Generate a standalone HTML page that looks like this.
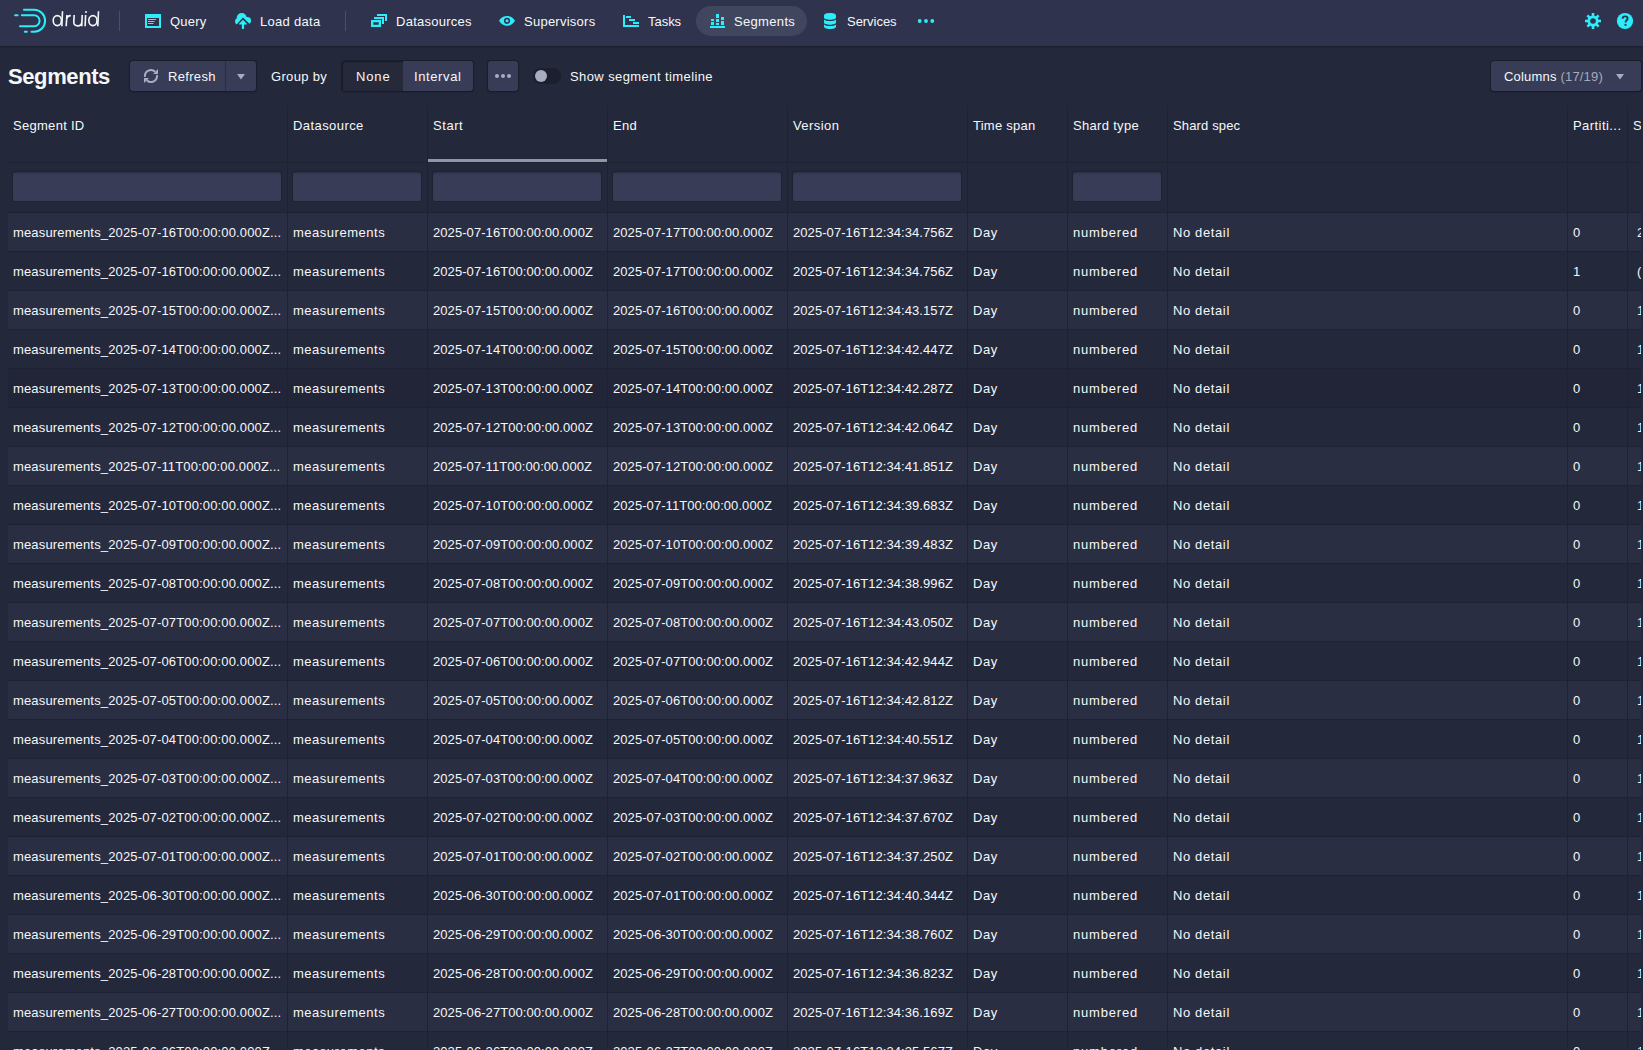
<!DOCTYPE html>
<html><head><meta charset="utf-8"><title>Segments</title>
<style>
*{box-sizing:border-box;margin:0;padding:0}
html,body{width:1643px;height:1050px;overflow:hidden;background:#24283b;font-family:"Liberation Sans",sans-serif;color:#f5f8fa;font-size:13px}
.abs{position:absolute}
.nav{position:absolute;left:0;top:0;width:1643px;height:46px;background:#2f334d;box-shadow:0 1px 0 #1d2030,0 2px 0 rgba(20,22,34,.25)}
.nt{position:absolute;top:15px;line-height:13px;font-size:13px;white-space:nowrap;letter-spacing:.15px}
.sep{position:absolute;top:11px;width:1px;height:20px;background:#4a4f68}
.pill{position:absolute;left:696px;top:6px;width:111px;height:30px;border-radius:15px;background:#41465f}
svg{position:absolute;overflow:visible}
.cy{fill:#2ceefb}
.tb-title{position:absolute;left:8px;top:66px;letter-spacing:-.4px;font-size:22px;line-height:21px;font-weight:bold;white-space:nowrap}
.btn{position:absolute;top:61px;height:30px;background:#383c57;border-radius:3px;box-shadow:0 0 0 1px rgba(20,22,34,.45),0 1px 2px rgba(20,22,34,.5)}
.tt{position:absolute;top:70px;line-height:13px;font-size:13px;white-space:nowrap;letter-spacing:.3px}
.table{position:absolute;left:8px;top:106px;width:1633px;height:944px;overflow:hidden}
.tr{position:relative;display:flex;white-space:nowrap;border-bottom:1px solid #1f2233}
.c{position:relative;flex:none;border-right:1px solid #1f2232;overflow:hidden;padding-left:5px}
.c0{width:280px}.c1{width:140px}.c2{width:180px}.c3{width:180px}.c4{width:180px}.c5{width:100px}.c6{width:100px}.c7{width:400px}.c8{width:60px}.c9{width:60px;border-right:none}
.thead{height:57px}
.thead .c{padding-top:13px;line-height:13px}
.tfilter{height:50px}
.tfilter .c{padding-top:8px;padding-right:5px;padding-left:4px}
.inp{height:31px;background:#383c57;border-radius:3px;box-shadow:inset 0 0 0 1px #1f2232,inset 0 2px 2px rgba(20,22,34,.35)}
.sortbar{position:absolute;left:0;right:0;bottom:0;height:3px;background:#9096aa}
.tr.odd,.tr.even{height:39px}
.tr.odd{background:#2a2e43}
.tr.odd .c,.tr.even .c{line-height:38px;padding-top:1px}
.t{letter-spacing:.3px}
.t.d{letter-spacing:.05px}
.sz{position:relative;left:4px}
.tr.hov{background:#212537}

</style></head>
<body>
<div class="nav">
<svg style="left:0;top:0" width="120" height="46" viewBox="0 0 120 46">
 <g fill="none" stroke="#2ceefb" stroke-width="2" stroke-linecap="round">
  <path d="M23.9,9.8 H34.15 A10.95,10.95 0 0 1 34.15,31.7 H31.5"/>
  <path d="M24.8,31.7 H26.8"/>
  <path d="M21.8,15.3 H34.15 A5.45,5.45 0 0 1 34.15,26.2 H20"/>
  <path d="M15.1,15.3 H17.6"/>
 </g>
 <g fill="none" stroke="#f5f8fa" stroke-width="1.6" stroke-linecap="butt">
  <ellipse cx="57.3" cy="20.6" rx="4.1" ry="5.0"/>
  <path d="M62.5,11.2 L61.9,26.3"/>
  <path d="M66.9,15 L66.2,26.3 M66.6,19.2 Q67.4,15.5 70.8,15.6"/>
  <path d="M74.2,15 L73.8,21.6 Q73.5,25.9 77.8,25.9 Q81.7,25.9 81.9,21.6 L82.2,15 M82.2,15 L81.8,26.3"/>
  <path d="M85.6,15 L85.1,26.3"/>
  <ellipse cx="92.9" cy="20.6" rx="4.1" ry="5.0"/>
  <path d="M98.5,11.2 L97.8,26.3"/>
 </g>
 <circle cx="86" cy="12" r="1" fill="#f5f8fa"/>
</svg>
<div class="sep" style="left:119px"></div>
<!-- Query -->
<svg style="left:145px;top:13px" width="16" height="16" viewBox="0 0 16 16">
 <path class="cy" fill-rule="evenodd" d="M0,1 H16 V15 H0 Z M2,5 V13 H14 V5 Z"/>
 <rect class="cy" x="3" y="6" width="8" height="1"/>
 <rect class="cy" x="3" y="8" width="6.5" height="1"/>
 <rect class="cy" x="3" y="10" width="5.5" height="1"/>
</svg>
<div class="nt" style="left:170px"><span style="letter-spacing:0.2px">Query</span></div>
<!-- Load data -->
<svg style="left:235px;top:13px" width="16" height="16" viewBox="0 0 16 16">
 <defs><mask id="cm" maskUnits="userSpaceOnUse" x="-2" y="-2" width="20" height="20">
  <rect x="-2" y="-2" width="20" height="20" fill="#000"/>
  <g fill="#fff"><circle cx="6.7" cy="5.1" r="5"/><circle cx="3.2" cy="8.4" r="3.15"/><circle cx="12.4" cy="7.6" r="3.65"/></g>
  <path d="M-1,14.4 L7.95,4.6 L17,13.3 V17 H-1 Z" fill="#000"/>
 </mask></defs>
 <rect x="-2" y="-2" width="20" height="20" class="cy" mask="url(#cm)"/>
 <path class="cy" d="M7.95,6.7 L12,10.9 L11.6,11.4 L9.05,11.4 V15.9 H6.9 V11.4 H4.3 L3.9,10.9 Z"/>
</svg>
<div class="nt" style="left:260px"><span style="letter-spacing:0.3px">Load data</span></div>
<div class="sep" style="left:345px"></div>
<!-- Datasources -->
<svg style="left:371px;top:13px" width="16" height="16" viewBox="0 0 16 16">
 <path class="cy" fill-rule="evenodd" d="M0,7 H10 V14 H0 Z M2.3,9.3 V11.7 H7.7 V9.3 Z"/>
 <path class="cy" d="M3,4 H13 V11 H11 V6 H3 Z"/>
 <path class="cy" d="M6,1 H16 V8 H14 V3 H6 Z"/>
</svg>
<div class="nt" style="left:396px"><span style="letter-spacing:0.26px">Datasources</span></div>
<!-- Supervisors -->
<svg style="left:499px;top:13px" width="16" height="16" viewBox="0 0 16 16">
 <path class="cy" fill-rule="evenodd" d="M0,7.8 C2,4.4 5,3 8,3 C11,3 14,4.4 16,7.8 C14,11.3 11,12.8 8,12.8 C5,12.8 2,11.3 0,7.8 Z M8,4.7 A3.1,3.1 0 1 0 8,10.9 A3.1,3.1 0 1 0 8,4.7 Z"/>
 <circle class="cy" cx="8" cy="7.8" r="1.5"/>
</svg>
<div class="nt" style="left:524px"><span style="letter-spacing:0.25px">Supervisors</span></div>
<!-- Tasks -->
<svg style="left:623px;top:13px" width="16" height="16" viewBox="0 0 16 16">
 <rect class="cy" x="0" y="2" width="2" height="12"/>
 <rect class="cy" x="0" y="12" width="16" height="2"/>
 <rect class="cy" x="3" y="3" width="5" height="2"/>
 <rect class="cy" x="6" y="6" width="6" height="2"/>
 <rect class="cy" x="10" y="9" width="6" height="2"/>
</svg>
<div class="nt" style="left:648px"><span style="letter-spacing:-0.03px">Tasks</span></div>
<div class="pill"></div>
<!-- Segments -->
<svg style="left:710px;top:13px" width="16" height="16" viewBox="0 0 16 16">
 <rect class="cy" x="0" y="13" width="15" height="2"/>
 <rect class="cy" x="1" y="6" width="3" height="2"/>
 <rect class="cy" x="1" y="9" width="3" height="3"/>
 <rect class="cy" x="6" y="1" width="3" height="4"/>
 <rect class="cy" x="6" y="6" width="3" height="3"/>
 <rect class="cy" x="6" y="10" width="3" height="2"/>
 <rect class="cy" x="11" y="4" width="3" height="3"/>
 <rect class="cy" x="11" y="8" width="3" height="4"/>
</svg>
<div class="nt" style="left:734px"><span style="letter-spacing:0.33px">Segments</span></div>
<!-- Services -->
<svg style="left:824px;top:13px" width="12" height="16" viewBox="0 0 12 16">
 <path class="cy" d="M0,2.5 C0,0.8 2.7,0 6,0 C9.3,0 12,0.8 12,2.5 V4.6 C12,6 9.3,6.8 6,6.8 C2.7,6.8 0,6 0,4.6 Z"/>
 <path class="cy" d="M0,6.4 C1.2,7.4 3.5,7.9 6,7.9 C8.5,7.9 10.8,7.4 12,6.4 V9.6 C12,11 9.3,11.8 6,11.8 C2.7,11.8 0,11 0,9.6 Z"/>
 <path class="cy" d="M0,11.4 C1.2,12.4 3.5,12.9 6,12.9 C8.5,12.9 10.8,12.4 12,11.4 V13.5 C12,15.2 9.3,16 6,16 C2.7,16 0,15.2 0,13.5 Z"/>
</svg>
<div class="nt" style="left:847px"><span style="letter-spacing:-0.04px">Services</span></div>
<svg style="left:917px;top:13px" width="18" height="16" viewBox="0 0 18 16">
 <circle class="cy" cx="2.7" cy="8" r="1.9"/><circle class="cy" cx="9" cy="8" r="1.9"/><circle class="cy" cx="15.3" cy="8" r="1.9"/>
</svg>
<!-- gear -->
<svg style="left:1585px;top:13px" width="16" height="16" viewBox="0 0 16 16">
 <defs><mask id="gm" maskUnits="userSpaceOnUse" x="-1" y="-1" width="18" height="18">
  <rect x="-1" y="-1" width="18" height="18" fill="#000"/>
  <g fill="#fff">
  <rect x="6.7" y="0" width="2.6" height="16"/>
  <rect x="0" y="6.7" width="16" height="2.6"/>
  <rect x="6.7" y="0" width="2.6" height="16" transform="rotate(45 8 8)"/>
  <rect x="6.7" y="0" width="2.6" height="16" transform="rotate(-45 8 8)"/>
  <circle cx="8" cy="8" r="5.6"/>
  </g>
  <circle cx="8" cy="8" r="2.8" fill="#000"/>
 </mask></defs>
 <rect x="-1" y="-1" width="18" height="18" class="cy" mask="url(#gm)"/>
</svg>
<!-- help -->
<svg style="left:1617px;top:13px" width="16" height="16" viewBox="0 0 16 16">
 <circle class="cy" cx="8" cy="8" r="8.1"/>
 <path d="M5.6,5.8 C5.6,4.2 6.7,3.4 8.1,3.4 C9.6,3.4 10.6,4.3 10.6,5.5 C10.6,7.2 8.5,7.4 8.5,9.6" fill="none" stroke="#2f334d" stroke-width="1.9"/>
 <rect x="7.5" y="10.9" width="2" height="1.9" fill="#2f334d"/>
</svg>
</div>

<div class="tb-title">Segments</div>
<div class="btn" style="left:130px;width:126px"></div>
<div class="abs" style="left:225px;top:61px;width:1px;height:30px;background:#2a2d44"></div>
<svg style="left:144px;top:69px" width="14" height="14" viewBox="0 0 14 14">
 <g fill="none" stroke="#a8adc2" stroke-width="2">
  <path d="M1,7.8 A6,6 0 0 1 11.2,2.8"/>
  <path d="M13,6.2 A6,6 0 0 1 2.8,11.2"/>
 </g>
 <path fill="#a8adc2" d="M9.1,4.9 L14,4.9 L14,-0.1 Z"/>
 <path fill="#a8adc2" d="M0,9 L5.1,9 L0,14.1 Z"/>
</svg>
<div class="tt" style="left:168px"><span style="letter-spacing:0.32px">Refresh</span></div>
<svg style="left:237px;top:74px" width="8" height="6" viewBox="0 0 8 6"><path fill="#a8adc2" d="M0,0 H8 L4,5.5 Z"/></svg>
<div class="tt" style="left:271px"><span style="letter-spacing:0.33px">Group by</span></div>
<div class="btn" style="left:342px;width:131px;background:#383c57"></div>
<div class="abs" style="left:342px;top:61px;width:61px;height:30px;background:#252939;border-radius:3px 0 0 3px;box-shadow:inset 1px 1px 1px rgba(0,0,0,.35)"></div>
<div class="tt" style="left:356px"><span style="letter-spacing:0.87px">None</span></div>
<div class="tt" style="left:414px"><span style="letter-spacing:0.61px">Interval</span></div>
<div class="btn" style="left:488px;width:30px"></div>
<svg style="left:488px;top:61px" width="30" height="30" viewBox="0 0 30 30"><g fill="#a8adc2"><circle cx="9" cy="15" r="2"/><circle cx="15" cy="15" r="2"/><circle cx="21" cy="15" r="2"/></g></svg>
<div class="abs" style="left:533px;top:68px;width:28px;height:16px;border-radius:8px;background:#1c1f2e"></div>
<div class="abs" style="left:535px;top:70px;width:12px;height:12px;border-radius:6px;background:#a9adc4"></div>
<div class="tt" style="left:570px"><span style="letter-spacing:0.41px">Show segment timeline</span></div>
<div class="btn" style="left:1491px;width:150px"></div>
<div class="tt" style="left:1504px;letter-spacing:.19px">Columns <span style="color:#a6aaba">(17/19)</span></div>
<svg style="left:1616px;top:74px" width="8" height="6" viewBox="0 0 8 6"><path fill="#a8adc2" d="M0,0 H8 L4,5.5 Z"/></svg>

<div class="table">
<div class="tr thead"><div class="c c0"><span class="t a" style="letter-spacing:0.29px">Segment ID</span></div><div class="c c1"><span class="t a" style="letter-spacing:0.43px">Datasource</span></div><div class="c c2"><span class="t a" style="letter-spacing:0.55px">Start</span><div class="sortbar"></div></div><div class="c c3"><span class="t a" style="letter-spacing:0.3px">End</span></div><div class="c c4"><span class="t a" style="letter-spacing:0.42px">Version</span></div><div class="c c5"><span class="t a" style="letter-spacing:0.25px">Time span</span></div><div class="c c6"><span class="t a" style="letter-spacing:0.31px">Shard type</span></div><div class="c c7"><span class="t a" style="letter-spacing:0.14px">Shard spec</span></div><div class="c c8"><span class="t a" style="letter-spacing:0.44px">Partiti...</span></div><div class="c c9"><span class="t a" style="letter-spacing:0.05px">S</span></div></div>
<div class="tr tfilter"><div class="c c0"><div class="inp"></div></div><div class="c c1"><div class="inp"></div></div><div class="c c2"><div class="inp"></div></div><div class="c c3"><div class="inp"></div></div><div class="c c4"><div class="inp"></div></div><div class="c c5"></div><div class="c c6"><div class="inp"></div></div><div class="c c7"></div><div class="c c8"></div><div class="c c9"></div></div>
<div class="tr odd"><div class="c c0"><span class="t a" style="letter-spacing:0.15px">measurements_2025-07-16T00:00:00.000Z...</span></div><div class="c c1"><span class="t a" style="letter-spacing:0.52px">measurements</span></div><div class="c c2"><span class="t d" style="letter-spacing:0.07px">2025-07-16T00:00:00.000Z</span></div><div class="c c3"><span class="t d" style="letter-spacing:0.07px">2025-07-17T00:00:00.000Z</span></div><div class="c c4"><span class="t d" style="letter-spacing:0.07px">2025-07-16T12:34:34.756Z</span></div><div class="c c5"><span class="t a" style="letter-spacing:0.6px">Day</span></div><div class="c c6"><span class="t a" style="letter-spacing:0.81px">numbered</span></div><div class="c c7"><span class="t a" style="letter-spacing:0.62px">No detail</span></div><div class="c c8"><span class="t d" style="letter-spacing:0.05px">0</span></div><div class="c c9"><span class="t d sz" style="letter-spacing:0.05px">2</span></div></div><div class="tr even"><div class="c c0"><span class="t a" style="letter-spacing:0.15px">measurements_2025-07-16T00:00:00.000Z...</span></div><div class="c c1"><span class="t a" style="letter-spacing:0.52px">measurements</span></div><div class="c c2"><span class="t d" style="letter-spacing:0.07px">2025-07-16T00:00:00.000Z</span></div><div class="c c3"><span class="t d" style="letter-spacing:0.07px">2025-07-17T00:00:00.000Z</span></div><div class="c c4"><span class="t d" style="letter-spacing:0.07px">2025-07-16T12:34:34.756Z</span></div><div class="c c5"><span class="t a" style="letter-spacing:0.6px">Day</span></div><div class="c c6"><span class="t a" style="letter-spacing:0.81px">numbered</span></div><div class="c c7"><span class="t a" style="letter-spacing:0.62px">No detail</span></div><div class="c c8"><span class="t d" style="letter-spacing:0.05px">1</span></div><div class="c c9"><span class="t d sz" style="letter-spacing:0.05px">(</span></div></div><div class="tr odd"><div class="c c0"><span class="t a" style="letter-spacing:0.15px">measurements_2025-07-15T00:00:00.000Z...</span></div><div class="c c1"><span class="t a" style="letter-spacing:0.52px">measurements</span></div><div class="c c2"><span class="t d" style="letter-spacing:0.07px">2025-07-15T00:00:00.000Z</span></div><div class="c c3"><span class="t d" style="letter-spacing:0.07px">2025-07-16T00:00:00.000Z</span></div><div class="c c4"><span class="t d" style="letter-spacing:0.07px">2025-07-16T12:34:43.157Z</span></div><div class="c c5"><span class="t a" style="letter-spacing:0.6px">Day</span></div><div class="c c6"><span class="t a" style="letter-spacing:0.81px">numbered</span></div><div class="c c7"><span class="t a" style="letter-spacing:0.62px">No detail</span></div><div class="c c8"><span class="t d" style="letter-spacing:0.05px">0</span></div><div class="c c9"><span class="t d sz" style="letter-spacing:0.05px">1</span></div></div><div class="tr even"><div class="c c0"><span class="t a" style="letter-spacing:0.15px">measurements_2025-07-14T00:00:00.000Z...</span></div><div class="c c1"><span class="t a" style="letter-spacing:0.52px">measurements</span></div><div class="c c2"><span class="t d" style="letter-spacing:0.07px">2025-07-14T00:00:00.000Z</span></div><div class="c c3"><span class="t d" style="letter-spacing:0.07px">2025-07-15T00:00:00.000Z</span></div><div class="c c4"><span class="t d" style="letter-spacing:0.07px">2025-07-16T12:34:42.447Z</span></div><div class="c c5"><span class="t a" style="letter-spacing:0.6px">Day</span></div><div class="c c6"><span class="t a" style="letter-spacing:0.81px">numbered</span></div><div class="c c7"><span class="t a" style="letter-spacing:0.62px">No detail</span></div><div class="c c8"><span class="t d" style="letter-spacing:0.05px">0</span></div><div class="c c9"><span class="t d sz" style="letter-spacing:0.05px">1</span></div></div><div class="tr even hov"><div class="c c0"><span class="t a" style="letter-spacing:0.15px">measurements_2025-07-13T00:00:00.000Z...</span></div><div class="c c1"><span class="t a" style="letter-spacing:0.52px">measurements</span></div><div class="c c2"><span class="t d" style="letter-spacing:0.07px">2025-07-13T00:00:00.000Z</span></div><div class="c c3"><span class="t d" style="letter-spacing:0.07px">2025-07-14T00:00:00.000Z</span></div><div class="c c4"><span class="t d" style="letter-spacing:0.07px">2025-07-16T12:34:42.287Z</span></div><div class="c c5"><span class="t a" style="letter-spacing:0.6px">Day</span></div><div class="c c6"><span class="t a" style="letter-spacing:0.81px">numbered</span></div><div class="c c7"><span class="t a" style="letter-spacing:0.62px">No detail</span></div><div class="c c8"><span class="t d" style="letter-spacing:0.05px">0</span></div><div class="c c9"><span class="t d sz" style="letter-spacing:0.05px">1</span></div></div><div class="tr even"><div class="c c0"><span class="t a" style="letter-spacing:0.15px">measurements_2025-07-12T00:00:00.000Z...</span></div><div class="c c1"><span class="t a" style="letter-spacing:0.52px">measurements</span></div><div class="c c2"><span class="t d" style="letter-spacing:0.07px">2025-07-12T00:00:00.000Z</span></div><div class="c c3"><span class="t d" style="letter-spacing:0.07px">2025-07-13T00:00:00.000Z</span></div><div class="c c4"><span class="t d" style="letter-spacing:0.07px">2025-07-16T12:34:42.064Z</span></div><div class="c c5"><span class="t a" style="letter-spacing:0.6px">Day</span></div><div class="c c6"><span class="t a" style="letter-spacing:0.81px">numbered</span></div><div class="c c7"><span class="t a" style="letter-spacing:0.62px">No detail</span></div><div class="c c8"><span class="t d" style="letter-spacing:0.05px">0</span></div><div class="c c9"><span class="t d sz" style="letter-spacing:0.05px">1</span></div></div><div class="tr odd"><div class="c c0"><span class="t a" style="letter-spacing:0.15px">measurements_2025-07-11T00:00:00.000Z...</span></div><div class="c c1"><span class="t a" style="letter-spacing:0.52px">measurements</span></div><div class="c c2"><span class="t d" style="letter-spacing:0.07px">2025-07-11T00:00:00.000Z</span></div><div class="c c3"><span class="t d" style="letter-spacing:0.07px">2025-07-12T00:00:00.000Z</span></div><div class="c c4"><span class="t d" style="letter-spacing:0.07px">2025-07-16T12:34:41.851Z</span></div><div class="c c5"><span class="t a" style="letter-spacing:0.6px">Day</span></div><div class="c c6"><span class="t a" style="letter-spacing:0.81px">numbered</span></div><div class="c c7"><span class="t a" style="letter-spacing:0.62px">No detail</span></div><div class="c c8"><span class="t d" style="letter-spacing:0.05px">0</span></div><div class="c c9"><span class="t d sz" style="letter-spacing:0.05px">1</span></div></div><div class="tr even"><div class="c c0"><span class="t a" style="letter-spacing:0.15px">measurements_2025-07-10T00:00:00.000Z...</span></div><div class="c c1"><span class="t a" style="letter-spacing:0.52px">measurements</span></div><div class="c c2"><span class="t d" style="letter-spacing:0.07px">2025-07-10T00:00:00.000Z</span></div><div class="c c3"><span class="t d" style="letter-spacing:0.07px">2025-07-11T00:00:00.000Z</span></div><div class="c c4"><span class="t d" style="letter-spacing:0.07px">2025-07-16T12:34:39.683Z</span></div><div class="c c5"><span class="t a" style="letter-spacing:0.6px">Day</span></div><div class="c c6"><span class="t a" style="letter-spacing:0.81px">numbered</span></div><div class="c c7"><span class="t a" style="letter-spacing:0.62px">No detail</span></div><div class="c c8"><span class="t d" style="letter-spacing:0.05px">0</span></div><div class="c c9"><span class="t d sz" style="letter-spacing:0.05px">1</span></div></div><div class="tr odd"><div class="c c0"><span class="t a" style="letter-spacing:0.15px">measurements_2025-07-09T00:00:00.000Z...</span></div><div class="c c1"><span class="t a" style="letter-spacing:0.52px">measurements</span></div><div class="c c2"><span class="t d" style="letter-spacing:0.07px">2025-07-09T00:00:00.000Z</span></div><div class="c c3"><span class="t d" style="letter-spacing:0.07px">2025-07-10T00:00:00.000Z</span></div><div class="c c4"><span class="t d" style="letter-spacing:0.07px">2025-07-16T12:34:39.483Z</span></div><div class="c c5"><span class="t a" style="letter-spacing:0.6px">Day</span></div><div class="c c6"><span class="t a" style="letter-spacing:0.81px">numbered</span></div><div class="c c7"><span class="t a" style="letter-spacing:0.62px">No detail</span></div><div class="c c8"><span class="t d" style="letter-spacing:0.05px">0</span></div><div class="c c9"><span class="t d sz" style="letter-spacing:0.05px">1</span></div></div><div class="tr even"><div class="c c0"><span class="t a" style="letter-spacing:0.15px">measurements_2025-07-08T00:00:00.000Z...</span></div><div class="c c1"><span class="t a" style="letter-spacing:0.52px">measurements</span></div><div class="c c2"><span class="t d" style="letter-spacing:0.07px">2025-07-08T00:00:00.000Z</span></div><div class="c c3"><span class="t d" style="letter-spacing:0.07px">2025-07-09T00:00:00.000Z</span></div><div class="c c4"><span class="t d" style="letter-spacing:0.07px">2025-07-16T12:34:38.996Z</span></div><div class="c c5"><span class="t a" style="letter-spacing:0.6px">Day</span></div><div class="c c6"><span class="t a" style="letter-spacing:0.81px">numbered</span></div><div class="c c7"><span class="t a" style="letter-spacing:0.62px">No detail</span></div><div class="c c8"><span class="t d" style="letter-spacing:0.05px">0</span></div><div class="c c9"><span class="t d sz" style="letter-spacing:0.05px">1</span></div></div><div class="tr odd"><div class="c c0"><span class="t a" style="letter-spacing:0.15px">measurements_2025-07-07T00:00:00.000Z...</span></div><div class="c c1"><span class="t a" style="letter-spacing:0.52px">measurements</span></div><div class="c c2"><span class="t d" style="letter-spacing:0.07px">2025-07-07T00:00:00.000Z</span></div><div class="c c3"><span class="t d" style="letter-spacing:0.07px">2025-07-08T00:00:00.000Z</span></div><div class="c c4"><span class="t d" style="letter-spacing:0.07px">2025-07-16T12:34:43.050Z</span></div><div class="c c5"><span class="t a" style="letter-spacing:0.6px">Day</span></div><div class="c c6"><span class="t a" style="letter-spacing:0.81px">numbered</span></div><div class="c c7"><span class="t a" style="letter-spacing:0.62px">No detail</span></div><div class="c c8"><span class="t d" style="letter-spacing:0.05px">0</span></div><div class="c c9"><span class="t d sz" style="letter-spacing:0.05px">1</span></div></div><div class="tr even"><div class="c c0"><span class="t a" style="letter-spacing:0.15px">measurements_2025-07-06T00:00:00.000Z...</span></div><div class="c c1"><span class="t a" style="letter-spacing:0.52px">measurements</span></div><div class="c c2"><span class="t d" style="letter-spacing:0.07px">2025-07-06T00:00:00.000Z</span></div><div class="c c3"><span class="t d" style="letter-spacing:0.07px">2025-07-07T00:00:00.000Z</span></div><div class="c c4"><span class="t d" style="letter-spacing:0.07px">2025-07-16T12:34:42.944Z</span></div><div class="c c5"><span class="t a" style="letter-spacing:0.6px">Day</span></div><div class="c c6"><span class="t a" style="letter-spacing:0.81px">numbered</span></div><div class="c c7"><span class="t a" style="letter-spacing:0.62px">No detail</span></div><div class="c c8"><span class="t d" style="letter-spacing:0.05px">0</span></div><div class="c c9"><span class="t d sz" style="letter-spacing:0.05px">1</span></div></div><div class="tr odd"><div class="c c0"><span class="t a" style="letter-spacing:0.15px">measurements_2025-07-05T00:00:00.000Z...</span></div><div class="c c1"><span class="t a" style="letter-spacing:0.52px">measurements</span></div><div class="c c2"><span class="t d" style="letter-spacing:0.07px">2025-07-05T00:00:00.000Z</span></div><div class="c c3"><span class="t d" style="letter-spacing:0.07px">2025-07-06T00:00:00.000Z</span></div><div class="c c4"><span class="t d" style="letter-spacing:0.07px">2025-07-16T12:34:42.812Z</span></div><div class="c c5"><span class="t a" style="letter-spacing:0.6px">Day</span></div><div class="c c6"><span class="t a" style="letter-spacing:0.81px">numbered</span></div><div class="c c7"><span class="t a" style="letter-spacing:0.62px">No detail</span></div><div class="c c8"><span class="t d" style="letter-spacing:0.05px">0</span></div><div class="c c9"><span class="t d sz" style="letter-spacing:0.05px">1</span></div></div><div class="tr even"><div class="c c0"><span class="t a" style="letter-spacing:0.15px">measurements_2025-07-04T00:00:00.000Z...</span></div><div class="c c1"><span class="t a" style="letter-spacing:0.52px">measurements</span></div><div class="c c2"><span class="t d" style="letter-spacing:0.07px">2025-07-04T00:00:00.000Z</span></div><div class="c c3"><span class="t d" style="letter-spacing:0.07px">2025-07-05T00:00:00.000Z</span></div><div class="c c4"><span class="t d" style="letter-spacing:0.07px">2025-07-16T12:34:40.551Z</span></div><div class="c c5"><span class="t a" style="letter-spacing:0.6px">Day</span></div><div class="c c6"><span class="t a" style="letter-spacing:0.81px">numbered</span></div><div class="c c7"><span class="t a" style="letter-spacing:0.62px">No detail</span></div><div class="c c8"><span class="t d" style="letter-spacing:0.05px">0</span></div><div class="c c9"><span class="t d sz" style="letter-spacing:0.05px">1</span></div></div><div class="tr odd"><div class="c c0"><span class="t a" style="letter-spacing:0.15px">measurements_2025-07-03T00:00:00.000Z...</span></div><div class="c c1"><span class="t a" style="letter-spacing:0.52px">measurements</span></div><div class="c c2"><span class="t d" style="letter-spacing:0.07px">2025-07-03T00:00:00.000Z</span></div><div class="c c3"><span class="t d" style="letter-spacing:0.07px">2025-07-04T00:00:00.000Z</span></div><div class="c c4"><span class="t d" style="letter-spacing:0.07px">2025-07-16T12:34:37.963Z</span></div><div class="c c5"><span class="t a" style="letter-spacing:0.6px">Day</span></div><div class="c c6"><span class="t a" style="letter-spacing:0.81px">numbered</span></div><div class="c c7"><span class="t a" style="letter-spacing:0.62px">No detail</span></div><div class="c c8"><span class="t d" style="letter-spacing:0.05px">0</span></div><div class="c c9"><span class="t d sz" style="letter-spacing:0.05px">1</span></div></div><div class="tr even"><div class="c c0"><span class="t a" style="letter-spacing:0.15px">measurements_2025-07-02T00:00:00.000Z...</span></div><div class="c c1"><span class="t a" style="letter-spacing:0.52px">measurements</span></div><div class="c c2"><span class="t d" style="letter-spacing:0.07px">2025-07-02T00:00:00.000Z</span></div><div class="c c3"><span class="t d" style="letter-spacing:0.07px">2025-07-03T00:00:00.000Z</span></div><div class="c c4"><span class="t d" style="letter-spacing:0.07px">2025-07-16T12:34:37.670Z</span></div><div class="c c5"><span class="t a" style="letter-spacing:0.6px">Day</span></div><div class="c c6"><span class="t a" style="letter-spacing:0.81px">numbered</span></div><div class="c c7"><span class="t a" style="letter-spacing:0.62px">No detail</span></div><div class="c c8"><span class="t d" style="letter-spacing:0.05px">0</span></div><div class="c c9"><span class="t d sz" style="letter-spacing:0.05px">1</span></div></div><div class="tr odd"><div class="c c0"><span class="t a" style="letter-spacing:0.15px">measurements_2025-07-01T00:00:00.000Z...</span></div><div class="c c1"><span class="t a" style="letter-spacing:0.52px">measurements</span></div><div class="c c2"><span class="t d" style="letter-spacing:0.07px">2025-07-01T00:00:00.000Z</span></div><div class="c c3"><span class="t d" style="letter-spacing:0.07px">2025-07-02T00:00:00.000Z</span></div><div class="c c4"><span class="t d" style="letter-spacing:0.07px">2025-07-16T12:34:37.250Z</span></div><div class="c c5"><span class="t a" style="letter-spacing:0.6px">Day</span></div><div class="c c6"><span class="t a" style="letter-spacing:0.81px">numbered</span></div><div class="c c7"><span class="t a" style="letter-spacing:0.62px">No detail</span></div><div class="c c8"><span class="t d" style="letter-spacing:0.05px">0</span></div><div class="c c9"><span class="t d sz" style="letter-spacing:0.05px">1</span></div></div><div class="tr even"><div class="c c0"><span class="t a" style="letter-spacing:0.15px">measurements_2025-06-30T00:00:00.000Z...</span></div><div class="c c1"><span class="t a" style="letter-spacing:0.52px">measurements</span></div><div class="c c2"><span class="t d" style="letter-spacing:0.07px">2025-06-30T00:00:00.000Z</span></div><div class="c c3"><span class="t d" style="letter-spacing:0.07px">2025-07-01T00:00:00.000Z</span></div><div class="c c4"><span class="t d" style="letter-spacing:0.07px">2025-07-16T12:34:40.344Z</span></div><div class="c c5"><span class="t a" style="letter-spacing:0.6px">Day</span></div><div class="c c6"><span class="t a" style="letter-spacing:0.81px">numbered</span></div><div class="c c7"><span class="t a" style="letter-spacing:0.62px">No detail</span></div><div class="c c8"><span class="t d" style="letter-spacing:0.05px">0</span></div><div class="c c9"><span class="t d sz" style="letter-spacing:0.05px">1</span></div></div><div class="tr odd"><div class="c c0"><span class="t a" style="letter-spacing:0.15px">measurements_2025-06-29T00:00:00.000Z...</span></div><div class="c c1"><span class="t a" style="letter-spacing:0.52px">measurements</span></div><div class="c c2"><span class="t d" style="letter-spacing:0.07px">2025-06-29T00:00:00.000Z</span></div><div class="c c3"><span class="t d" style="letter-spacing:0.07px">2025-06-30T00:00:00.000Z</span></div><div class="c c4"><span class="t d" style="letter-spacing:0.07px">2025-07-16T12:34:38.760Z</span></div><div class="c c5"><span class="t a" style="letter-spacing:0.6px">Day</span></div><div class="c c6"><span class="t a" style="letter-spacing:0.81px">numbered</span></div><div class="c c7"><span class="t a" style="letter-spacing:0.62px">No detail</span></div><div class="c c8"><span class="t d" style="letter-spacing:0.05px">0</span></div><div class="c c9"><span class="t d sz" style="letter-spacing:0.05px">1</span></div></div><div class="tr even"><div class="c c0"><span class="t a" style="letter-spacing:0.15px">measurements_2025-06-28T00:00:00.000Z...</span></div><div class="c c1"><span class="t a" style="letter-spacing:0.52px">measurements</span></div><div class="c c2"><span class="t d" style="letter-spacing:0.07px">2025-06-28T00:00:00.000Z</span></div><div class="c c3"><span class="t d" style="letter-spacing:0.07px">2025-06-29T00:00:00.000Z</span></div><div class="c c4"><span class="t d" style="letter-spacing:0.07px">2025-07-16T12:34:36.823Z</span></div><div class="c c5"><span class="t a" style="letter-spacing:0.6px">Day</span></div><div class="c c6"><span class="t a" style="letter-spacing:0.81px">numbered</span></div><div class="c c7"><span class="t a" style="letter-spacing:0.62px">No detail</span></div><div class="c c8"><span class="t d" style="letter-spacing:0.05px">0</span></div><div class="c c9"><span class="t d sz" style="letter-spacing:0.05px">1</span></div></div><div class="tr odd"><div class="c c0"><span class="t a" style="letter-spacing:0.15px">measurements_2025-06-27T00:00:00.000Z...</span></div><div class="c c1"><span class="t a" style="letter-spacing:0.52px">measurements</span></div><div class="c c2"><span class="t d" style="letter-spacing:0.07px">2025-06-27T00:00:00.000Z</span></div><div class="c c3"><span class="t d" style="letter-spacing:0.07px">2025-06-28T00:00:00.000Z</span></div><div class="c c4"><span class="t d" style="letter-spacing:0.07px">2025-07-16T12:34:36.169Z</span></div><div class="c c5"><span class="t a" style="letter-spacing:0.6px">Day</span></div><div class="c c6"><span class="t a" style="letter-spacing:0.81px">numbered</span></div><div class="c c7"><span class="t a" style="letter-spacing:0.62px">No detail</span></div><div class="c c8"><span class="t d" style="letter-spacing:0.05px">0</span></div><div class="c c9"><span class="t d sz" style="letter-spacing:0.05px">1</span></div></div><div class="tr even"><div class="c c0"><span class="t a" style="letter-spacing:0.15px">measurements_2025-06-26T00:00:00.000Z...</span></div><div class="c c1"><span class="t a" style="letter-spacing:0.52px">measurements</span></div><div class="c c2"><span class="t d" style="letter-spacing:0.07px">2025-06-26T00:00:00.000Z</span></div><div class="c c3"><span class="t d" style="letter-spacing:0.07px">2025-06-27T00:00:00.000Z</span></div><div class="c c4"><span class="t d" style="letter-spacing:0.07px">2025-07-16T12:34:35.567Z</span></div><div class="c c5"><span class="t a" style="letter-spacing:0.6px">Day</span></div><div class="c c6"><span class="t a" style="letter-spacing:0.81px">numbered</span></div><div class="c c7"><span class="t a" style="letter-spacing:0.62px">No detail</span></div><div class="c c8"><span class="t d" style="letter-spacing:0.05px">0</span></div><div class="c c9"><span class="t d sz" style="letter-spacing:0.05px">1</span></div></div>
</div>
</body></html>
